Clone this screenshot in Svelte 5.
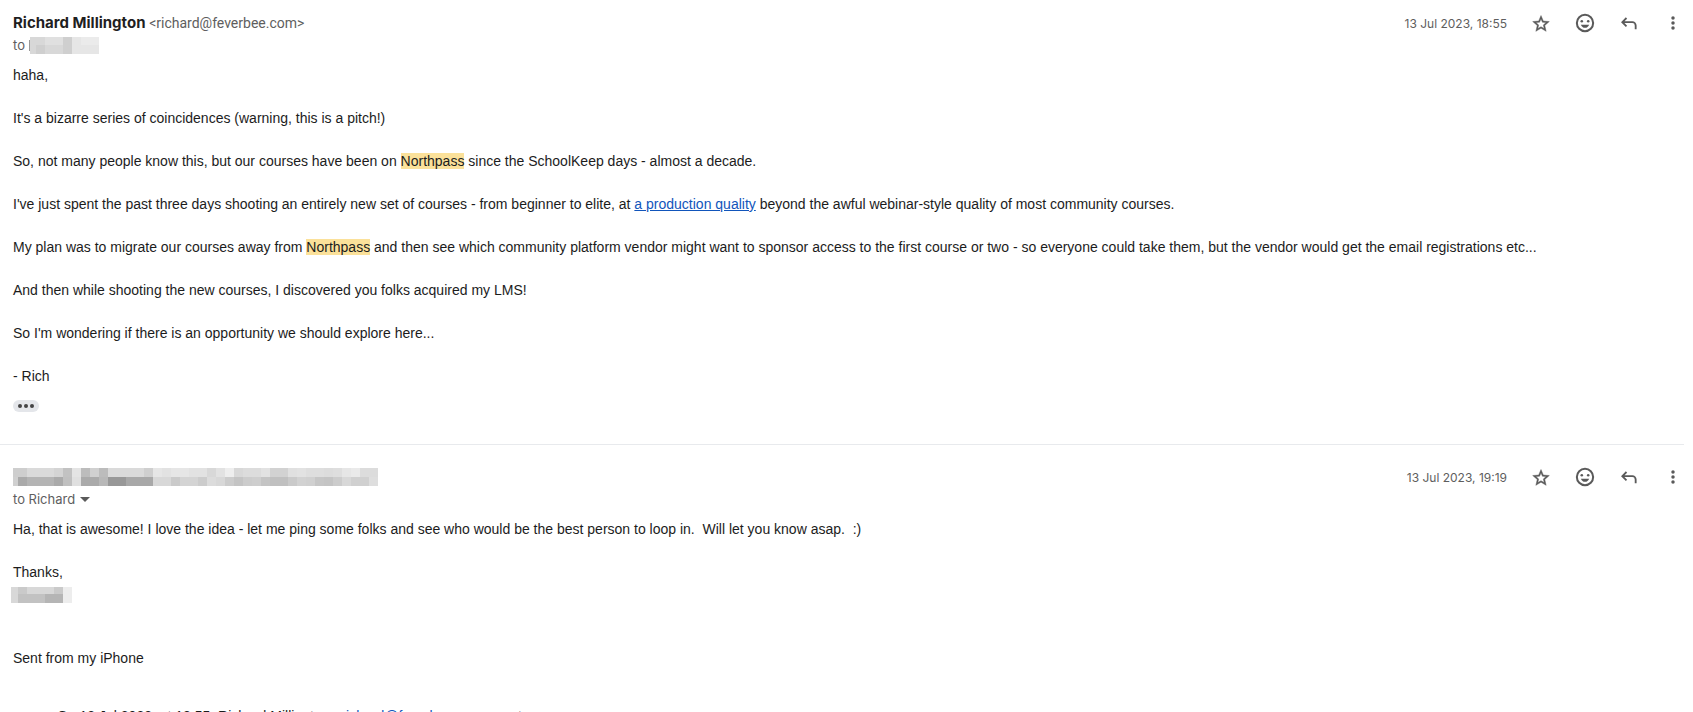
<script>
  const cells = [13, 18, 27, 36, 45, 54, 63, 72, 81, 90, 99, 108, 117, 126, 135, 144, 153, 162, 171, 180, 189, 198, 207, 216, 225, 234, 243, 252, 261, 270, 279, 288, 297, 306, 315, 324, 333, 342, 351, 360, 369];
  const top = 'ce ce da da da d4 c2 e4 bc d0 bc da da da da cf e6 e2 e6 e6 e2 e2 d8 e2 ee d8 dc dc e2 d2 d2 e0 e2 de de dc de e6 ea dc dc ec'.split(' ');
  const low = 'd0 aa b4 b4 b4 aa c0 e0 aa aa b8 98 98 a8 a8 a8 d8 d8 ca d4 d4 cc dc d8 cc c4 cc ce c4 c0 c0 ca d2 d0 c6 c4 cc d8 d0 d0 de'.split(' ');
  const grey = (h) => `#${h}${h}${h}`;
  const star = 'M22 9.24l-7.19-.62L12 2 9.19 8.63 2 9.24l5.46 4.73L5.82 21 12 17.27 18.18 21l-1.63-7.03L22 9.24zM12 15.4l-3.76 2.27 1-4.28-3.32-2.88 4.38-.38L12 6.1l1.71 4.04 4.38.38-3.32 2.88 1 4.28L12 15.4z';
</script>

{#snippet tools(date)}
  <div class="tools">
    <time>{date}</time>
    <button aria-label="Star"><svg viewBox="0 -1 24 24"><path d={star} stroke="#5a5a5a" stroke-width=".5" /></svg></button>
    <button aria-label="Add reaction"><svg class="big" viewBox="0 0 24 24"><path fill-rule="evenodd" d="M12 2a10 10 0 1 0 0 20 10 10 0 0 0 0-20zm0 2.200a7.800 7.800 0 1 1 0 15.600 7.800 7.800 0 0 1 0-15.600z" /><circle cx="8.500" cy="10" r="1.400" /><circle cx="15.500" cy="10" r="1.400" /><path d="M7.500 13.800h9c-.8 2.100-2.400 3.400-4.500 3.400s-3.700-1.300-4.500-3.400z" /></svg></button>
    <button aria-label="Reply"><svg viewBox="0 -1 24 24"><path d="M4.500 10H16a4 4 0 0 1 4 4v4.500M9 5l-5 5 5 5" fill="none" stroke="#5a5a5a" stroke-width="2.200" /></svg></button>
    <button aria-label="More"><svg viewBox="0 0 24 24"><circle cx="12" cy="6" r="2.100" /><circle cx="12" cy="12" r="2.100" /><circle cx="12" cy="18" r="2.100" /></svg></button>
  </div>
{/snippet}

<main>
  <article>
    <header>
      <div class="who">
        <div class="from"><strong>Richard Millington</strong> <span>&lt;richard@feverbee.com&gt;</span></div>
        <div class="to">to
          <svg class="mask" width="70" height="17" viewBox="0 0 70 17" shape-rendering="crispEdges" aria-hidden="true">
            <path fill="#e6e6e6" d="M1 0h69v17H1z" /><path fill="#d8d8d8" d="M1 0h42v17H1z" /><path fill="#e0e0e0" d="M16 0h18v8H16z" /><path fill="#cfcfcf" d="M7 8h9v9H7zM34 0h9v17h-9z" /><path fill="#ebebeb" d="M52 0h18v8H52z" /><path fill="#999" d="M0 3h1v11H0z" />
          </svg>
        </div>
      </div>
      {@render tools('13 Jul 2023, 18:55')}
    </header>
    <div class="body">
      <p>haha,</p>
      <p>It's a bizarre series of coincidences (warning, this is a pitch!)</p>
      <p>So, not many people know this, but our courses have been on <mark>Northpass</mark> since the SchoolKeep days - almost a decade.</p>
      <p>I've just spent the past three days shooting an entirely new set of courses - from beginner to elite, at <a href="#quality">a production quality</a> beyond the awful webinar-style quality of most community courses.</p>
      <p>My plan was to migrate our courses away from <mark>Northpass</mark> and then see which community platform vendor might want to sponsor access to the first course or two - so everyone could take them, but the vendor would get the email registrations etc...</p>
      <p>And then while shooting the new courses, I discovered you folks acquired my LMS!</p>
      <p>So I'm wondering if there is an opportunity we should explore here...</p>
      <p>- Rich</p>
    </div>
    <button class="more" aria-label="Show trimmed content"><i></i><i></i><i></i></button>
  </article>
  <article class="second">
    <header>
      <div class="who">
        <div class="from">
          <svg class="mask" width="365" height="18" viewBox="13 0 365 18" shape-rendering="crispEdges" aria-hidden="true">
            {#each cells as x, i}
              <rect {x} y="0" width={i ? 9 : 5} height="9" fill={grey(top[i])} />
              <rect {x} y="9" width={i ? 9 : 5} height="9" fill={grey(low[i])} />
            {/each}
          </svg>
        </div>
        <div class="to">to Richard <button class="caret" aria-label="Show details"></button></div>
      </div>
      {@render tools('13 Jul 2023, 19:19')}
    </header>
    <div class="body">
      <p>Ha, that is awesome! I love the idea - let me ping some folks and see who would be the best person to loop in.&nbsp; Will let you know asap.&nbsp; :)</p>
      <div>
        <p>Thanks,</p>
        <svg class="mask sign" width="61" height="16" viewBox="0 0 61 16" shape-rendering="crispEdges" aria-hidden="true">
          <path fill="#ededed" d="M0 0h61v16H0z" /><path fill="#d8d8d8" d="M0 0h52v16H0z" /><path fill="#cacaca" d="M7 0h9v7H7zM43 0h9v7h-9z" /><path fill="#c2c2c2" d="M7 7h27v9H7z" /><path fill="#b5b5b5" d="M34 7h18v9H34z" />
        </svg>
      </div>
      <p class="sent">Sent from my iPhone</p>
    </div>
    <blockquote>On 13 Jul 2023, at 18:55, Richard Millington &lt;<a href="mailto:richard@feverbee.com">richard@feverbee.com</a>&gt; wrote:</blockquote>
  </article>
</main>

<style>
  :global(body) { background: #fff; overflow: hidden; }
  main { height: 100vh; overflow: hidden; font: 14px/21px "Liberation Sans", Arial, sans-serif; color: #1c1c1c; }
  article { padding: 12px 10px 0 13px; }
  .second { margin-right: 9px; padding: 21px 0 0 13px; border-top: 1px solid #e8eaed; }
  header { display: flex; justify-content: space-between; align-items: flex-start; }
  .from, .to, time { font-family: Inter, sans-serif; font-size: 13px; color: #5e5e5e; }
  .from { height: 22px; line-height: 22px; white-space: nowrap; }
  .from strong { font-size: 15px; font-weight: 700; color: #1f1f1f; }
  .from span { font-family: Roboto, sans-serif; font-size: 14px; }
  .to { height: 22px; line-height: 22px; display: flex; align-items: center; gap: 4px; }
  .mask { display: block; }
  .from .mask { padding-top: 2px; }
  .tools { display: flex; align-items: center; height: 22px; gap: 24px; }
  .second .tools { padding-right: 1px; }
  time { font-size: 12px; white-space: nowrap; }
  button { border: 0; background: none; padding: 0; margin: 0; color: #5a5a5a; }
  .tools button { display: flex; width: 20px; height: 20px; align-items: center; justify-content: center; }
  .tools svg { width: 20px; height: 20px; fill: #5a5a5a; flex: none; }
  .tools svg.big { width: 22px; height: 22px; }
  .body { display: flex; flex-direction: column; gap: 22px; padding-top: 9px; }
  p { margin: 0; }
  mark { background: #fbe19a; color: inherit; }
  a { color: #1155bb; }
  .more { display: flex; align-items: center; justify-content: center; gap: 2px; width: 26px; height: 12px; margin: 13px 0 32px; border-radius: 6px; background: #e4e6ea; }
  .more i { width: 4px; height: 4px; border-radius: 50%; background: #444; }
  .caret { border: 5px solid transparent; border-top-color: #5a5a5a; border-bottom: 0; margin-left: 1px; }
  .sign { margin: 4px 0 0 -2px; }
  .sent { padding-top: 23px; }
  blockquote { margin: 37px 0 0 44px; }
</style>
